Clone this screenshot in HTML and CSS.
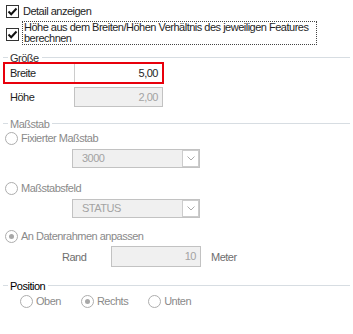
FILE: index.html
```html
<!DOCTYPE html>
<html lang="de">

<head>
    <meta charset="UTF-8">
    <title>Detail Einstellungen</title>
    <link rel="stylesheet" href="styles.css">
</head>

<body>
    <div id="panel">
        <div class="check first">
            <span class="box"><svg width="11" height="11" viewBox="0 0 11 11"><path d="M1.5 5.5 L4.2 8.2 L9.5 2.5" fill="none" stroke="#111" stroke-width="2"/></svg></span>
            <span class="text">Detail anzeigen</span>
        </div>
        <div class="check second">
            <span class="box"><svg width="11" height="11" viewBox="0 0 11 11"><path d="M1.5 5.5 L4.2 8.2 L9.5 2.5" fill="none" stroke="#111" stroke-width="2"/></svg></span>
            <span class="text focus">Höhe aus dem Breiten/Höhen Verhältnis des jeweiligen Features<br>berechnen</span>
        </div>

        <div class="legend size"><span class="label dark">Größe</span></div>
        <div class="row selected">
            <span class="label">Breite</span>
            <span class="field">5,00</span>
        </div>
        <div class="row second-row">
            <span class="label">Höhe</span>
            <span class="field disabled">2,00</span>
        </div>

        <div class="gray">
            <div class="legend scale"><span class="label">Maßstab</span></div>
            <div class="radio r1"><span class="circle"></span>Fixierter Maßstab</div>
            <div class="combo"><span class="value">3000</span><span class="arrow"><svg width="8" height="5" viewBox="0 0 8 5"><path d="M0.5 0.5 L4 4 L7.5 0.5" fill="none" stroke="#aaa"/></svg></span></div>
            <div class="radio r2"><span class="circle"></span>Maßstabsfeld</div>
            <div class="combo"><span class="value">STATUS</span><span class="arrow"><svg width="8" height="5" viewBox="0 0 8 5"><path d="M0.5 0.5 L4 4 L7.5 0.5" fill="none" stroke="#aaa"/></svg></span></div>
            <div class="radio r3"><span class="circle on"></span>An Datenrahmen anpassen</div>
            <div class="rand">
                <span class="rand-label">Rand</span>
                <span class="field disabled small">10</span>
                <span class="unit">Meter</span>
            </div>
        </div>

        <div class="legend pos"><span class="label black">Position</span></div>
        <div class="radios">
            <div class="radio"><span class="circle"></span>Oben</div>
            <div class="radio"><span class="circle on"></span>Rechts</div>
            <div class="radio"><span class="circle"></span>Unten</div>
        </div>
    </div>
</body>

</html>
```

FILE: styles.css
```css
body {
    margin: 0;
    background-color: #fff;
    font-family: "Liberation Sans", Arial, sans-serif;
    font-size: 11px;
    letter-spacing: -0.5px;
    color: #1e1e1e;
}

#panel {
    width: 353px;
    height: 334px;
    padding-top: 5px;
    box-sizing: border-box;
    overflow: hidden;
}

.check {
    display: flex;
    align-items: center;
    padding-left: 6px;
    height: 13px;
}

.check .box {
    width: 11px;
    height: 11px;
    border: 1px solid #333;
    display: flex;
    flex-shrink: 0;
}

.check .text {
    margin-left: 4px;
    line-height: 11px;
}

.check.second {
    margin-top: 3px;
    height: 24px;
}

.check.second .box {
    margin-top: 2px;
}

.focus {
    border: 1px dotted #444;
    padding: 0 8px 0 1px;
    margin-left: 3px;
    height: 22px;
}

.check .text.focus {
    margin-left: 3px;
}

.legend {
    display: flex;
    align-items: center;
    height: 9px;
    padding-left: 3px;
}

.legend::before {
    content: "";
    width: 5px;
    border-top: 1px solid #d7dde2;
}

.legend::after {
    content: "";
    flex: 1;
    margin: 0 3px 0 3px;
    border-top: 1px solid #d7dde2;
}

.legend .label {
    padding-left: 2px;
}

.legend.size {
    margin-top: 8px;
}

.legend.scale {
    margin-top: 12px;
}

.legend.pos {
    margin-top: 14px;
}

.dark {
    color: #333;
}

.black {
    color: #000;
}

.row {
    display: flex;
    align-items: center;
    width: 161px;
    height: 20px;
    margin-left: 3px;
    box-sizing: border-box;
    padding-left: 7px;
}

.row.selected {
    border: 2px solid #e8000c;
    height: 22px;
    padding-left: 5px;
}

.row.second-row {
    margin-top: 3px;
}

.row .label {
    width: 64px;
    flex-shrink: 0;
}

.field {
    width: 89px;
    height: 20px;
    box-sizing: border-box;
    text-align: right;
    line-height: 18px;
    padding-right: 4px;
    border-left: 1px solid #ccc;
}

.selected .field {
    height: 18px;
}

.field.disabled {
    border: 1px solid #c2c2c2;
    background-color: #f0f0f0;
    color: #a3a3a3;
}

.gray {
    color: #8a8a8a;
}

.radio {
    display: flex;
    align-items: center;
    padding-left: 5px;
    height: 16px;
}

.r1 {
    margin-top: 2px;
}

.r2 {
    margin-top: 12px;
}

.r3 {
    margin-top: 10px;
}

.circle {
    width: 11px;
    height: 11px;
    border: 1px solid #adadad;
    border-radius: 50%;
    margin-right: 3px;
    position: relative;
    flex-shrink: 0;
}

.circle.on::after {
    content: "";
    position: absolute;
    left: 3px;
    top: 3px;
    width: 5px;
    height: 5px;
    border-radius: 50%;
    background-color: #a8a8a8;
}

.combo {
    display: flex;
    width: 128px;
    height: 19px;
    margin: 3px 0 0 72px;
    border: 1px solid #c2c2c2;
    background-color: #f0f0f0;
    box-sizing: border-box;
}

.combo .value {
    flex: 1;
    padding-left: 9px;
    line-height: 17px;
    color: #a3a3a3;
}

.combo .arrow {
    width: 15px;
    border: 1px solid #ccc;
    background-color: #fff;
    display: flex;
    align-items: center;
    justify-content: center;
}

.rand {
    display: flex;
    align-items: center;
    margin-top: 2px;
    height: 21px;
}

.rand-label {
    width: 49px;
    padding-left: 62px;
    color: #6e6e6e;
}

.field.small {
    width: 90px;
    height: 21px;
}

.unit {
    margin-left: 10px;
    color: #6e6e6e;
}

.radios {
    display: flex;
    padding-left: 15px;
    margin-top: 3px;
    color: #8a8a8a;
}

.radios .radio {
    margin-right: 15px;
}
```
